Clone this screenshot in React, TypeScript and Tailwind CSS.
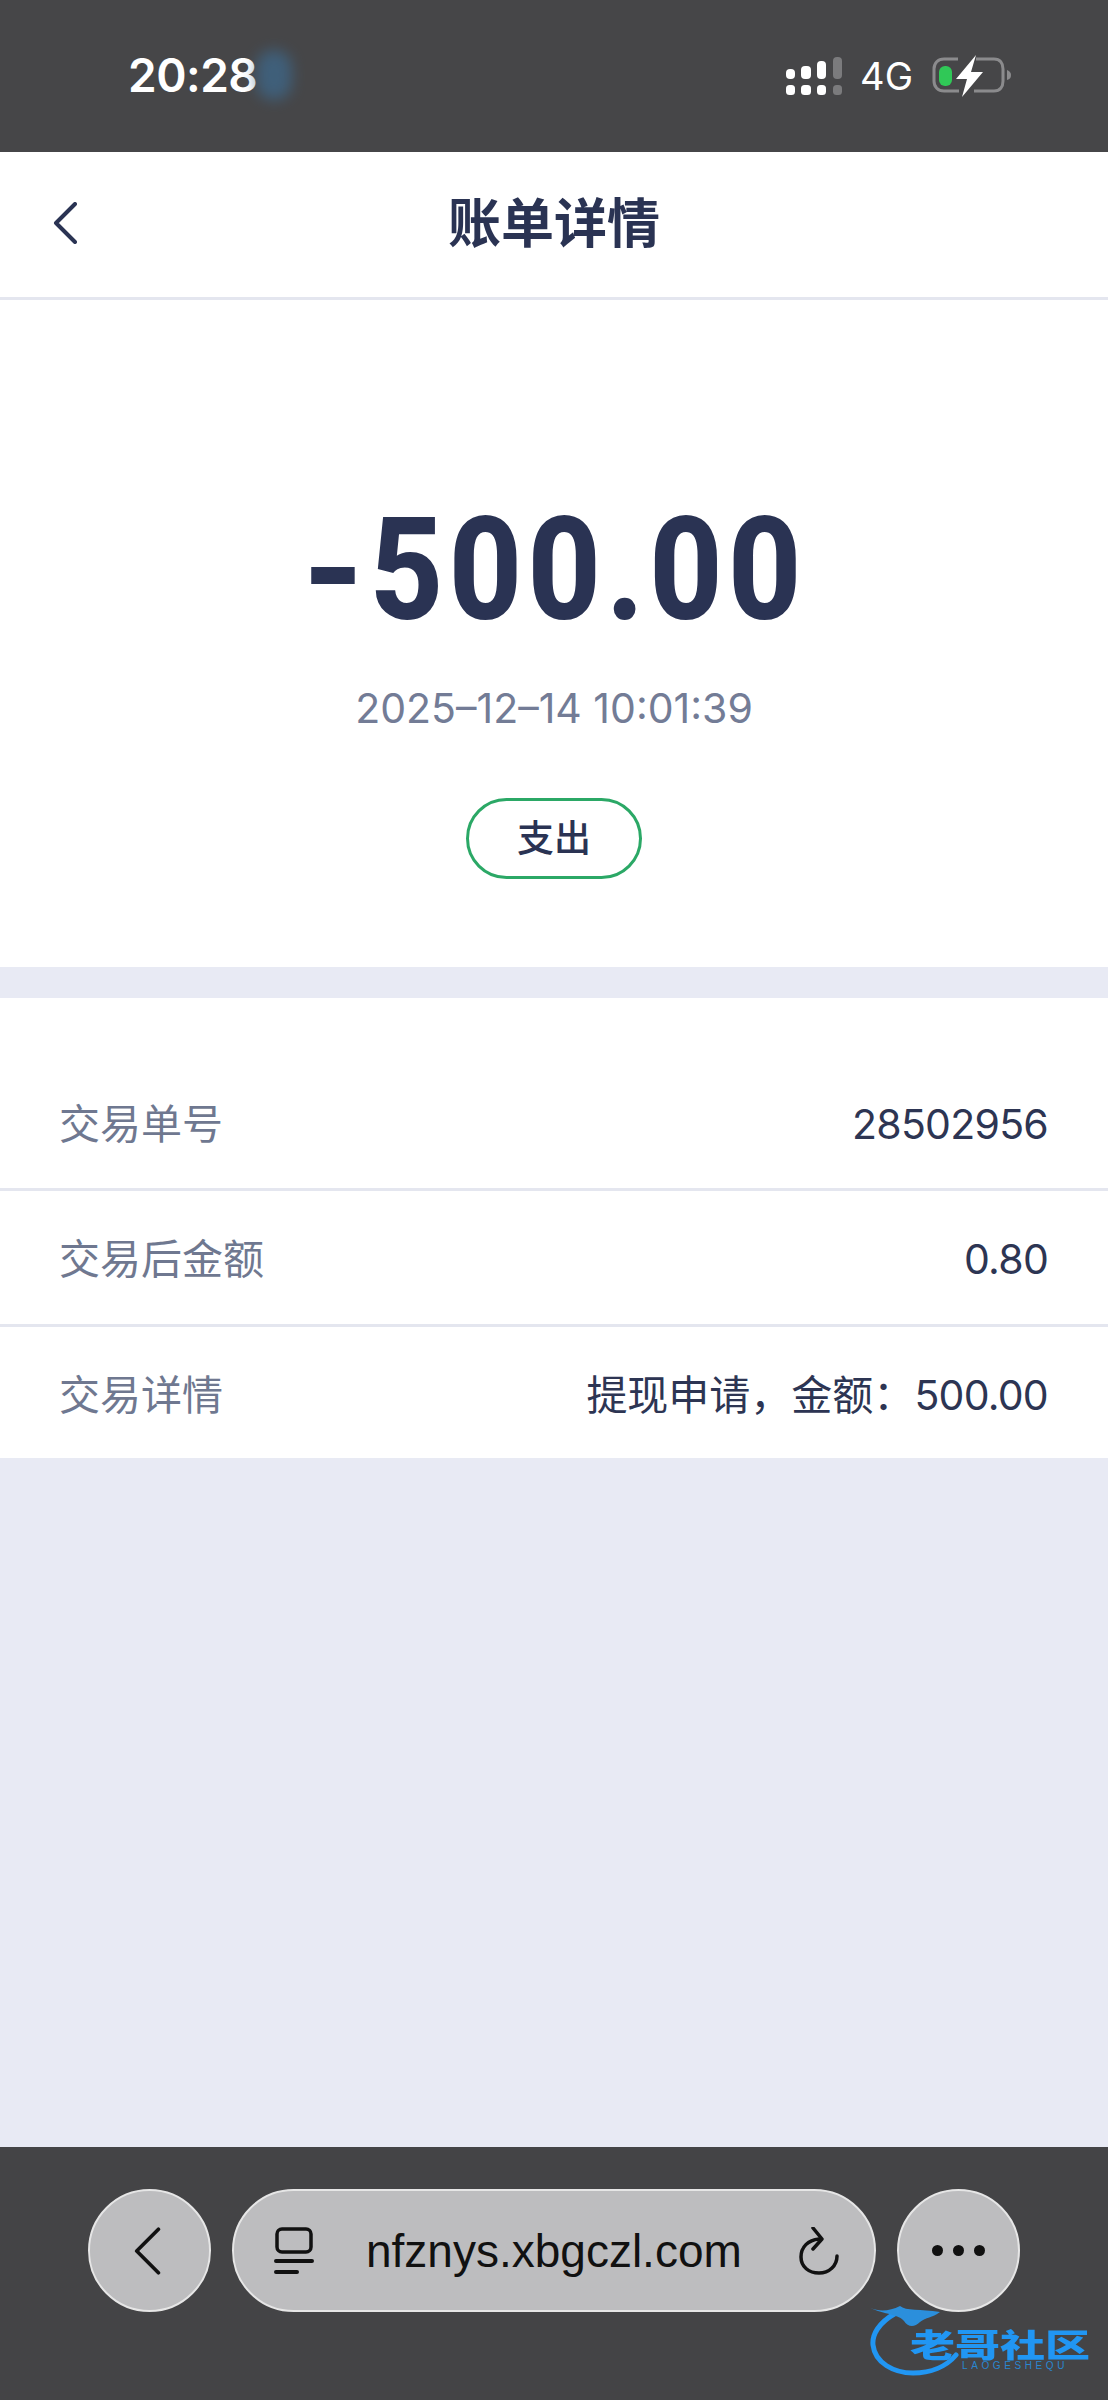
const rows = [
  { label: '交易单号', prefix: '', value: '28502956', rowClass: 'h-[135px] border-b-[3px] border-[#e4e6ef] pt-[5px]' },
  { label: '交易后金额', prefix: '', value: '0.80', rowClass: 'h-[136px] border-b-[3px] border-[#e4e6ef] pt-[5px]' },
  { label: '交易详情', prefix: '提现申请，金额：', value: '500.00', rowClass: 'h-[131px] pt-[6px]' },
]

function BackChevron({ color, width, height, stroke }: { color: string; width: number; height: number; stroke: number }) {
  return (
    <svg width={width} height={height} viewBox="0 0 24 42" fill="none" stroke={color} strokeWidth={stroke} strokeLinecap="round" strokeLinejoin="round">
      <path d="M22 2L3 21L22 40" />
    </svg>
  )
}

function SignalIcon() {
  return (
    <svg width="56" height="38" viewBox="0 0 56 38" fill="#fff">
      <rect x="0" y="12" width="9" height="10" rx="4" />
      <rect x="0" y="28" width="9" height="10" rx="3.5" />
      <rect x="15" y="9" width="10" height="13" rx="4" />
      <rect x="15" y="28" width="10" height="10" rx="3.5" />
      <rect x="31" y="4" width="9" height="18" rx="4" />
      <rect x="31" y="28" width="9" height="10" rx="3.5" />
      <rect x="47" y="0" width="9" height="22" rx="4" fill="#7b7b7d" />
      <rect x="47" y="28" width="9" height="10" rx="3.5" fill="#7b7b7d" />
    </svg>
  )
}

function BatteryIcon() {
  return (
    <svg width="80" height="42" viewBox="0 0 80 42">
      <path d="M26 4H12C6 4 2 8 2 14V26C2 32 6 36 12 36H27M44 4H62C68 4 71 8 71 14V26C71 32 68 36 62 36H42" fill="none" stroke="#8b8b8d" strokeWidth="3" />
      <rect x="7" y="11" width="13" height="20" rx="6" fill="#30c857" />
      <path d="M75 15C78 16 79 18 79 20C79 23 78 24 75 25Z" fill="#8b8b8d" />
      <path d="M44 0L24 24H35L30 42L51 17H39Z" fill="#fff" />
    </svg>
  )
}

function TabsIcon() {
  return (
    <svg width="40" height="48" viewBox="0 0 40 48" fill="none" stroke="#111" strokeWidth="3.5" strokeLinecap="round">
      <rect x="3" y="2" width="34" height="23" rx="5" />
      <path d="M2 34H38M2 45H23" strokeWidth="4" />
    </svg>
  )
}

function ReloadIcon() {
  return (
    <svg width="40" height="48" viewBox="0 0 40 48" fill="none" stroke="#111" strokeWidth="3.5" strokeLinecap="round" strokeLinejoin="round">
      <path d="M20 12C9 13 2 20 2 30C2 40 10 46 20 46C30 46 38 39 38 29" />
      <path d="M14 1L23 12L14 22" />
    </svg>
  )
}

function Watermark() {
  return (
    <div className="absolute left-[870px] top-[2305px] h-[72px] w-[224px]">
      <svg className="absolute left-0 top-0" width="110" height="72" viewBox="0 0 110 72" fill="none">
        <path d="M26 8C8 18 2 30 3 40C5 58 24 68 43 68C60 68 76 62 86 50" stroke="#2196f3" strokeWidth="5" strokeLinecap="round" />
        <path d="M0 3C10 7 20 6 30 1C36 6 50 4 70 7C62 13 56 12 50 17C44 23 38 22 34 16C30 10 14 9 0 3Z" fill="#2b8fdc" />
      </svg>
      <div className="absolute left-[40px] top-[18px] origin-left scale-y-[0.72] whitespace-nowrap font-['Noto_Sans_CJK_SC',sans-serif] text-[45px] leading-[40px] font-black text-[#2196f3]">
        老哥社区
      </div>
      <div className="absolute left-[92px] top-[55px] whitespace-nowrap font-['Liberation_Sans',sans-serif] text-[10px] leading-[12px] tracking-[3.6px] text-[#2a86cf]">
        LAOGESHEQU
      </div>
    </div>
  )
}

export default function App() {
  return (
    <div className="relative flex h-[2400px] w-[1108px] flex-col overflow-hidden bg-[#e8eaf4] font-['Inter','Noto_Sans_CJK_SC',sans-serif]">
      {/* status bar */}
      <div className="flex h-[152px] items-start justify-between bg-[#464648] pl-[128px] pr-[96px] pt-[47px] text-white">
        <span className="text-[46px] leading-[56px] font-semibold tracking-[-0.5px]">20:28</span>
        <div className="mt-[8px] flex items-center">
          <SignalIcon />
          <span className="ml-[18px] text-[38px] leading-[38px]">4G</span>
          <div className="ml-[19px]">
            <BatteryIcon />
          </div>
        </div>
      </div>
      <div className="absolute left-[256px] top-[50px] h-[50px] w-[36px] rounded-full bg-[#3d6a8f] opacity-70 blur-[7px]" />

      {/* nav */}
      <div className="relative flex h-[148px] items-center justify-center border-b-[3px] border-[#e4e6ef] bg-white">
        <div className="absolute left-[53px] top-[50px]">
          <BackChevron color="#2a3353" width={24} height={42} stroke={4} />
        </div>
        <h1 className="text-[53px] font-bold text-[#2a3353]">账单详情</h1>
      </div>

      {/* amount */}
      <div className="flex h-[667px] flex-col items-center bg-white pt-[186px]">
        <div className="scale-x-[0.89] font-['Roboto',sans-serif] text-[143px] leading-[168px] font-extrabold tracking-[6px] text-[#2a3353]">
          <span className="mr-[17px] inline-block origin-left scale-x-[1.2] tracking-[0px]">-</span>500.00
        </div>
        <div className="mt-[29px] text-[41px] leading-[50px] text-[#737c96]">2025–12–14 10:01:39</div>
        <div className="mt-[65px] flex h-[81px] w-[176px] items-center justify-center rounded-full border-[3px] border-[#2ba866] text-[37px] font-medium text-[#2a3353]">
          支出
        </div>
      </div>

      {/* details */}
      <div className="mt-[31px] bg-white pt-[58px]">
        {rows.map((row) => (
          <div key={row.label} className={`flex items-center justify-between pl-[59px] pr-[60px] text-[41px] ${row.rowClass}`}>
            <span className="text-[#6f7890]">{row.label}</span>
            <span className="text-[#2d3553]">
              {row.prefix}
              <span className="tracking-[-0.75px]">{row.value}</span>
            </span>
          </div>
        ))}
      </div>

      {/* browser bar */}
      <div className="mt-auto flex h-[253px] justify-center gap-[21px] bg-[#444446] pt-[42px]">
        <div className="flex h-[123px] w-[123px] items-center justify-center rounded-full border-2 border-[#e6e6e6] bg-[#bdbdbf]">
          <div className="mr-[6px] flex">
            <BackChevron color="#111" width={28} height={48} stroke={3.2} />
          </div>
        </div>
        <div className="flex h-[123px] w-[644px] items-center rounded-full border-2 border-[#e6e6e6] bg-[#bdbdbf] pl-[40px] pr-[35px]">
          <TabsIcon />
          <span className="ml-[52px] font-['Liberation_Sans',sans-serif] text-[46px] leading-[54px] text-[#111]">nfznys.xbgczl.com</span>
          <div className="ml-auto">
            <ReloadIcon />
          </div>
        </div>
        <div className="flex h-[123px] w-[123px] items-center justify-center gap-[10px] rounded-full border-2 border-[#e6e6e6] bg-[#bdbdbf]">
          <span className="h-[11px] w-[11px] rounded-full bg-[#111]" />
          <span className="h-[11px] w-[11px] rounded-full bg-[#111]" />
          <span className="h-[11px] w-[11px] rounded-full bg-[#111]" />
        </div>
      </div>
      <Watermark />
    </div>
  )
}
